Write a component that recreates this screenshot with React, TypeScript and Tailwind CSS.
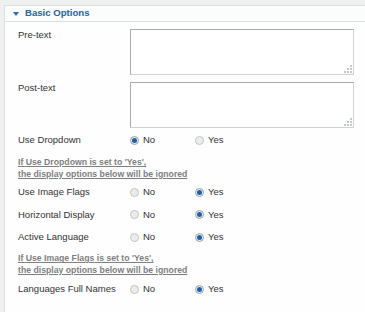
import React from "react";

const font = { fontFamily: '"Liberation Sans", Arial, sans-serif' };

function Grip() {
  const dots: [number, number][] = [
    [6, 0],
    [3, 3],
    [6, 3],
    [0, 6],
    [3, 6],
    [6, 6],
  ];
  return (
    <svg className="absolute right-[2px] bottom-[2px]" width="8" height="8" viewBox="0 0 8 8">
      {dots.map(([x, y], i) => (
        <rect key={i} x={x} y={y} width="2" height="2" fill="#c4c8c8" />
      ))}
    </svg>
  );
}

function Radio({ checked }: { checked: boolean }) {
  if (checked) {
    return (
      <span className="w-[9px] h-[9px] rounded-full border border-[#9aa4ac] bg-[#e9eef2] flex items-center justify-center">
        <span className="w-[5px] h-[5px] rounded-full bg-[#1f5fa6]" />
      </span>
    );
  }
  return <span className="w-[9px] h-[9px] rounded-full border border-[#c3c6c6] bg-[#ebecec]" />;
}

function YesNo({ label, value, h = "h-[22.5px]", mt = "" }: { label: string; value: "no" | "yes"; h?: string; mt?: string }) {
  return (
    <div className={`flex items-center ${h} ${mt}`}>
      <div className="w-[112px]">{label}</div>
      <div className="w-[65px] flex items-center gap-[4px]">
        <Radio checked={value === "no"} />
        <span>No</span>
      </div>
      <div className="flex items-center gap-[4px]">
        <Radio checked={value === "yes"} />
        <span>Yes</span>
      </div>
    </div>
  );
}

function Note({ what, mt }: { what: string; mt: string }) {
  return (
    <div className={`${mt} text-[8.7px] leading-[11.5px] font-bold text-[#7d7f7f] underline`}>
      <div>If {what} is set to 'Yes',</div>
      <div>the display options below will be ignored</div>
    </div>
  );
}

function TextField({ label, mt }: { label: string; mt: string }) {
  return (
    <div className={`flex ${mt}`}>
      <div className="w-[112px] leading-[12px]">{label}</div>
      <div className="relative w-[224px] h-[46px]">
        <textarea className="block w-full h-full resize-none bg-white border border-[#cfd2d2] border-t-[#a9acac] border-l-[#a9acac] outline-none" />
        <Grip />
      </div>
    </div>
  );
}

export default function App() {
  return (
    <div className="w-[365px] h-[312px] overflow-hidden bg-[#eff1f0] pt-[5px] pl-[4px]" style={font}>
      <div className="w-[420px] h-[320px] bg-[#fdfefd] border-t border-l border-[#dcdfde]">
        <div className="h-[16px] border-b border-[#dcdfde] flex items-center pl-[8px] bg-[#fbfcfc]">
          <svg width="6" height="4" viewBox="0 0 6 4" className="mr-[6px] mt-[1px]">
            <polygon points="0,0 6,0 3,4" fill="#2b6cb0" />
          </svg>
          <span className="text-[9.6px] font-bold text-[#2463a6]">Basic Options</span>
        </div>
        <div className="pl-[13px] text-[9.5px] text-[#333]">
          <TextField label="Pre-text" mt="mt-[7px]" />
          <TextField label="Post-text" mt="mt-[7px]" />
          <YesNo label="Use Dropdown" value="no" h="h-[23px]" mt="mt-[1px]" />
          <Note what="Use Dropdown" mt="mt-[5px]" />
          <YesNo label="Use Image Flags" value="yes" mt="mt-[1px]" />
          <YesNo label="Horizontal Display" value="yes" />
          <YesNo label="Active Language" value="yes" />
          <Note what="Use Image Flags" mt="mt-[4.75px]" />
          <YesNo label="Languages Full Names" value="yes" h="h-[23px]" mt="mt-[1.75px]" />
        </div>
      </div>
    </div>
  );
}
